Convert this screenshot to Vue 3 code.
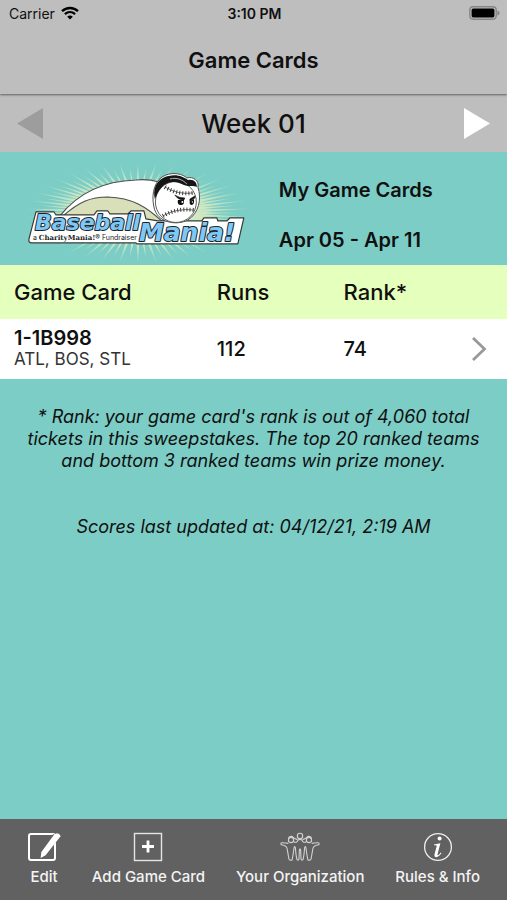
<script setup>
import { ref, computed } from "vue";

const weeks = [{ number: "01", range: "Apr 05 - Apr 11" }];
const weekIndex = ref(0);
const week = computed(() => weeks[weekIndex.value]);

const cards = [
  { id: "1-1B998", teams: ["ATL", "BOS", "STL"], runs: 112, rank: 74 },
];

const tabs = [
  { name: "edit", label: "Edit" },
  { name: "add", label: "Add Game Card" },
  { name: "org", label: "Your Organization" },
  { name: "info", label: "Rules & Info" },
];

function changeWeek(step) {
  const next = weekIndex.value + step;
  if (weeks[next]) weekIndex.value = next;
}

// Sunburst behind the logo: thin wedges around one centre
function getRays() {
  const cx = 138;
  const cy = 214;
  const count = 76;
  const rays = [];
  for (let i = 0; i < count; i++) {
    const a = (i / count) * Math.PI * 2;
    const long = i % 2 ? 1 : 0.88;
    const x = cx + Math.cos(a) * 113 * long;
    const y = cy + Math.sin(a) * 51 * long;
    const len = Math.hypot(x - cx, y - cy);
    const dx = ((y - cy) / len) * 1.3;
    const dy = ((x - cx) / len) * 1.3;
    const mx = cx + (x - cx) * 0.6;
    const my = cy + (y - cy) * 0.6;
    rays.push(
      `M${cx} ${cy}L${(mx + dx).toFixed(1)} ${(my - dy).toFixed(1)}L${x.toFixed(1)} ${y.toFixed(1)}L${(mx - dx).toFixed(1)} ${(my + dy).toFixed(1)}Z`
    );
  }
  return rays.join("");
}
const rays = getRays();
</script>

<template>
  <div class="page">
    <header class="top">
      <div class="status">
        <div class="carrier">
          <span>Carrier</span>
          <svg width="18" height="14" viewBox="0 0 18 14" aria-hidden="true">
            <g fill="none" stroke="#000" stroke-width="2.3">
              <path d="M1 5.2 C5.5 0.9 12.5 0.9 17 5.2" />
              <path d="M3.9 8.2 C6.9 5.5 11.1 5.5 14.1 8.2" />
            </g>
            <path d="M6.2 10.7 Q9 8.4 11.8 10.7 L9 13.6Z" />
          </svg>
        </div>
        <span class="clock">3:10 PM</span>
        <svg class="battery" width="31" height="14" viewBox="0 0 31 14" aria-hidden="true">
          <rect x="0.8" y="0.8" width="26.4" height="12.4" rx="3.4" fill="none" stroke="#858585" stroke-width="1.4" />
          <rect x="2.6" y="2.6" width="22.8" height="8.8" rx="1.6" />
          <path d="M28.4 4.6 Q30.6 5.4 30.6 7 Q30.6 8.6 28.4 9.4Z" fill="#858585" />
        </svg>
      </div>
      <h1>Game Cards</h1>
    </header>

    <nav class="week">
      <button type="button" aria-label="Previous week" disabled @click="changeWeek(-1)">
        <svg width="26" height="31" viewBox="0 0 26 31"><path d="M26 0V31L0 15.5Z" fill="#9d9d9d" /></svg>
      </button>
      <h2>Week {{ week.number }}</h2>
      <button type="button" aria-label="Next week" @click="changeWeek(1)">
        <svg width="26" height="31" viewBox="0 0 26 31"><path d="M0 0V31L26 15.5Z" fill="#fff" /></svg>
      </button>
    </nav>

    <section class="hero">
      <div class="logo">
        <svg viewBox="20 158 235 108" role="img" aria-label="Baseball Mania!">
          <defs>
            <radialGradient id="glow">
              <stop offset="0" stop-color="#e6ecc4" />
              <stop offset="0.6" stop-color="#cfe8c2" />
              <stop offset="1" stop-color="#8fd4c6" />
            </radialGradient>
            <radialGradient id="haze">
              <stop offset="0.4" stop-color="#cfe2b8" />
              <stop offset="1" stop-color="#cfe2b8" stop-opacity="0" />
            </radialGradient>
          </defs>
          <ellipse cx="138" cy="214" rx="74" ry="32" fill="url(#haze)" />
          <path :d="rays" fill="url(#glow)" />
          <path d="M62 217 C77 202 88 198 108 198 C132 198 147 205 160 221Z" fill="#d9dfb8" />

          <!-- trail of the ball -->
          <path
            d="M60 217 C78 194 104 182 136 181 C146 180 152 181 159 183 L164 224 C146 207 132 199 108 198 C90 198 79 203 63 217Z"
            fill="#fff" stroke="#4a504e" stroke-width="1.1"
          />

          <!-- name plates -->
          <path
            d="M36 213H54L56 216H94L97 212H108L110 215H128L131 212H144L146 220L158 222H202L204 219H217L218 222H227L230 219H244L238 245H137L136 244H32Q28 244 29 240Z"
            fill="#fff" stroke="#353c3a" stroke-width="1.2" stroke-linejoin="round"
          />
          <g class="wordmark">
            <text x="35" y="231" font-size="22">Baseball</text>
            <text x="139" y="242" font-size="25">Mania!</text>
          </g>
          <text class="tag" x="33" y="241"><tspan>a </tspan><tspan class="serif">CharityMania!</tspan><tspan>® Fundraiser</tspan></text>

          <!-- ball with cap -->
          <path
            d="M154 208 C151 194 155 180 166 176 C174 173 183 175 187 179 C193 177 200 182 198 188 C202 200 199 214 188 221 C177 227 157 224 154 208Z"
            fill="#fff" stroke="#4a504e" stroke-width="1"
          />
          <circle cx="176" cy="203" r="20.5" fill="#fff" stroke="#333" stroke-width="0.8" />
          <path
            d="M155 200 C152 187 160 178 169 177 C177 175 184 178 188 181 C194 180 197 183 197 188 C194 186 189 188 184 186 C176 182 169 182 163 187 C159 191 157 195 155 200Z"
            fill="#151515"
          />
          <path d="M170 180 C177 178 183 181 187 185" fill="none" stroke="#ddd" stroke-width="0.8" />
          <g fill="none" stroke="#333">
            <path d="M165 188 Q178 196 193 194" stroke-width="0.7" />
            <path d="M165 188 Q178 196 193 194" stroke-width="4" stroke-dasharray="0.9 2.2" />
            <path d="M163 217 Q176 209 194 211" stroke-width="0.7" />
            <path d="M163 217 Q176 209 194 211" stroke-width="4" stroke-dasharray="0.9 2.2" />
          </g>
          <path d="M175 196 Q179 199 185 199 L184 201 Q178 201 175 196Z M195 197 L190 200 L190 202 L195 199Z" fill="#111" stroke="#111" stroke-width="0.6" />
          <path d="M178 201 Q177 206 181 206 Q185 206 184 201Z M190 202 Q189 206 192 206 Q195 205 194 200Z" fill="#111" />
          <circle cx="182.5" cy="203" r="1" fill="#fff" />
          <circle cx="192.5" cy="203" r="0.7" fill="#fff" />
        </svg>
      </div>
      <div class="summary">
        <p>My Game Cards</p>
        <p>{{ week.range }}</p>
      </div>
    </section>

    <main>
      <table>
        <thead>
          <tr>
            <th class="col-card" scope="col">Game Card</th>
            <th class="col-runs" scope="col">Runs</th>
            <th scope="col">Rank*</th>
            <th class="col-open"></th>
          </tr>
        </thead>
        <tbody>
          <tr v-for="card in cards" :key="card.id">
            <td>
              <div class="card-id">{{ card.id }}</div>
              <div class="teams">{{ card.teams.join(", ") }}</div>
            </td>
            <td>{{ card.runs }}</td>
            <td>{{ card.rank }}</td>
            <td>
              <button type="button" :aria-label="`Open ${card.id}`">
                <svg width="16" height="26" viewBox="0 0 16 26">
                  <path d="M2 2L13.5 13L2 24" fill="none" stroke="#999" stroke-width="2.8" />
                </svg>
              </button>
            </td>
          </tr>
        </tbody>
      </table>

      <div class="notes">
        <p>
          * Rank: your game card's rank is out of 4,060 total tickets in this
          sweepstakes. The top 20 ranked teams and bottom 3 ranked teams win
          prize money.
        </p>
        <p>Scores last updated at: 04/12/21, 2:19 AM</p>
      </div>
    </main>

    <footer class="tabs">
      <button v-for="tab in tabs" :key="tab.name" type="button">
        <svg v-if="tab.name === 'edit'" width="34" height="30" viewBox="0 0 34 30">
          <rect x="2" y="2" width="26" height="26" rx="2" fill="none" stroke="#fff" stroke-width="2" />
          <path d="M29 4L15.5 22" stroke="#616161" stroke-width="7" />
          <path d="M27.2 2.6L30 1.2Q33.4 2 33.4 4.4L18.6 23.2L13.6 26L14.4 20Z" fill="#fff" />
        </svg>
        <svg v-else-if="tab.name === 'add'" width="30" height="30" viewBox="0 0 30 30">
          <rect x="1.5" y="1.5" width="27" height="27" fill="none" stroke="#e4e4e4" stroke-width="1.4" />
          <path d="M15 8.5V20.5M9 14.5H21" stroke="#fff" stroke-width="2.8" />
        </svg>
        <svg v-else-if="tab.name === 'org'" width="40" height="30" viewBox="0 0 40 30">
          <g fill="none" stroke="#d2d2d2" stroke-width="1.1" stroke-linejoin="round">
            <circle cx="20" cy="4" r="2.7" />
            <circle cx="11" cy="8" r="2.6" />
            <circle cx="29" cy="8" r="2.6" />
            <path d="M8.5 7Q9 4 12 4.4Q14.5 7 17.4 7.6M31.5 7Q31 4 28 4.4Q25.5 7 22.6 7.6" />
            <path d="M13.4 9.8Q17 11.4 18 8Q20 6.8 22 8Q23 11.4 26.6 9.8" />
            <path d="M8.4 11.4Q5 10.6 1.4 10.8Q0.2 11.8 1.4 12.8Q6.6 13.4 7.2 17L8.8 26.4Q9.4 29 12 28Q13 24 14 16Q14.6 13 15.4 16Q16 24 17 27.6Q18.6 29 19 26.6L19.4 18Q20 15.6 20.6 18L21 26.6Q21.4 29 23 27.6Q24 24 24.6 16Q25.4 13 26 16Q27 24 28 28Q30.6 29 31.2 26.4L32.8 17Q33.4 13.4 38.6 12.8Q39.8 11.8 38.6 10.8Q35 10.6 31.6 11.4" />
          </g>
        </svg>
        <svg v-else width="30" height="30" viewBox="0 0 30 30">
          <circle cx="15" cy="15" r="13.4" fill="none" stroke="#eee" stroke-width="1.3" />
          <circle cx="16.6" cy="6.6" r="2" fill="#fff" />
          <path d="M11 12.4L17.4 11.2L14.6 22Q14.3 23.8 15.3 23.2Q16.6 22.4 17.8 20.6L18.5 21.1Q16 25.2 13.2 25.2Q10.8 25 11.6 22L13.8 13.8Q13.8 13 11 13.2Z" fill="#fff" />
        </svg>
        <span>{{ tab.label }}</span>
      </button>
    </footer>
  </div>
</template>

<style>
body {
  background: #7ccdc6;
}
</style>

<style scoped>
.page {
  display: flex;
  flex-direction: column;
  min-height: 100vh;
  background: #7ccdc6;
  color: #101010;
  font-family: Inter, "Liberation Sans", sans-serif;
}

h1,
h2,
p {
  margin: 0;
}

button {
  padding: 0;
  border: none;
  background: none;
  color: inherit;
  font: inherit;
  cursor: pointer;
}

svg {
  display: block;
}

.top {
  position: relative;
  background: #bebebe;
  box-shadow: 0 1px 2px rgba(0, 0, 0, 0.5);
}

.status {
  display: grid;
  grid-template-columns: 1fr auto 1fr;
  align-items: center;
  height: 26px;
  padding: 0 7px 0 9px;
  font-size: 14px;
}

.carrier {
  display: flex;
  align-items: center;
  gap: 6px;
}

.clock {
  font-weight: 600;
}

.battery {
  justify-self: end;
}

h1 {
  padding: 20px 0;
  font-size: 22px;
  font-weight: 600;
  line-height: 28px;
  text-align: center;
}

.week {
  display: flex;
  align-items: center;
  justify-content: space-between;
  height: 58px;
  padding: 0 17px;
  background: #bebebe;
}

h2 {
  font-size: 26px;
  font-weight: 500;
}

.hero {
  display: grid;
  grid-template-columns: 55% 1fr;
  align-items: center;
  padding-top: 5px;
}

.logo {
  padding: 0 24px 0 20px;
}

.wordmark {
  fill: #7fc8f5;
  stroke: #1c2426;
  stroke-width: 2px;
  stroke-linejoin: round;
  paint-order: stroke;
  font-family: "DejaVu Sans", sans-serif;
  font-weight: bold;
  font-style: italic;
}

.tag {
  fill: #222;
  font-size: 7px;
}

.serif {
  font-family: "DejaVu Serif", serif;
  font-weight: bold;
}

.summary {
  display: grid;
  gap: 26px;
  padding-top: 8px;
  font-size: 20px;
  font-weight: 600;
  line-height: 24px;
}

table {
  width: 100%;
  table-layout: fixed;
  border-collapse: collapse;
  background: #fff;
}

th,
td {
  padding: 0;
  text-align: left;
}

th:first-child,
td:first-child {
  padding-left: 14px;
}

th {
  height: 54px;
  background: #e5ffbc;
  font-size: 22px;
  font-weight: 500;
}

td {
  height: 60px;
  font-size: 20px;
  font-weight: 500;
}

td button {
  display: block;
}

.col-card {
  width: 40%;
}

.col-runs {
  width: 25%;
}

.col-open {
  width: 36px;
}

.card-id {
  font-weight: 600;
  line-height: 20px;
}

.teams {
  color: #333;
  font-size: 17px;
  font-weight: 400;
  line-height: 22px;
}

.notes {
  display: grid;
  gap: 44px;
  padding: 27px 20px;
  font-size: 18px;
  font-style: italic;
  line-height: 22px;
  text-align: center;
}

.tabs {
  display: flex;
  justify-content: space-between;
  margin-top: auto;
  padding: 13px 27px 12px;
  background: #616161;
  color: #f4f4f4;
  font-size: 15px;
  font-weight: 500;
}

.tabs button {
  display: flex;
  flex-direction: column;
  align-items: center;
  gap: 4px;
  line-height: 22px;
}
</style>
